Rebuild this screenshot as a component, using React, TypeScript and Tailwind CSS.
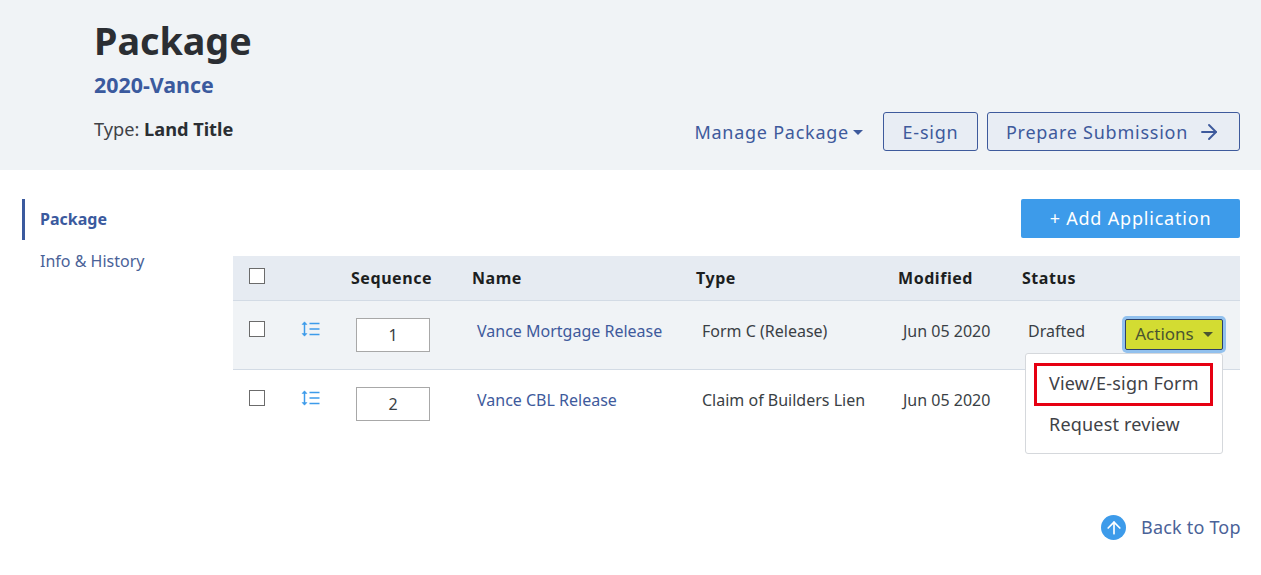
import { ArrowRight, ArrowUp } from 'lucide-react';

const cols = 'grid grid-cols-[68px_50px_121px_224px_202px_124px_1fr]';

function Checkbox({ className }: { className: string }) {
    return <div className={`w-4 h-4 bg-white border border-[#6b6b6b] ${className}`} />;
}

function SortIcon() {
    return (
        <svg width="20" height="16" viewBox="0 0 20 16" fill="none" stroke="#3d9bea" strokeWidth="1.5">
            <path d="M3.5 2v12" />
            <path d="M1 3.5 3.5 0.8 6 3.5z" fill="#3d9bea" strokeWidth="0.5" />
            <path d="M1 12.5 3.5 15.2 6 12.5z" fill="#3d9bea" strokeWidth="0.5" />
            <path d="M8.5 2.5h10M8.5 8h10M8.5 13.5h10" />
        </svg>
    );
}

function Row({ seq, name, type, status, rowClass }: { seq: string; name: string; type: string; status?: string; rowClass: string }) {
    return (
        <div className={`${cols} ${rowClass} border-b border-[#d3dbe5] text-[16px] text-[#3a3f45]`}>
            <div className="pl-[16px] pt-[20px]">
                <Checkbox className="" />
            </div>
            <div className="pt-[20px]">
                <SortIcon />
            </div>
            <div className="pl-[5px] pt-[17px]">
                <div className="w-[74px] h-[34px] bg-white border border-[#a8a8a8] flex items-center justify-center">{seq}</div>
            </div>
            <div className="pl-[5px] pt-[18px] text-[#3e5a9c] whitespace-nowrap">{name}</div>
            <div className="pl-[6px] pt-[18px] whitespace-nowrap">{type}</div>
            <div className="pl-[5px] pt-[18px] whitespace-nowrap">Jun 05 2020</div>
            <div className="pl-[6px] pt-[18px]">{status}</div>
        </div>
    );
}

export default function App() {
    return (
        <div className="relative h-[575px] w-[1261px] overflow-hidden bg-white font-['Noto_Sans',sans-serif]">
            <header className="h-[170px] bg-[#f0f3f6] flex justify-between pl-[94px] pr-[21px]">
                <div>
                    <h1 className="text-[37.7px] leading-[46px] font-bold text-[#2b2e33] pt-[18px] box-content">Package</h1>
                    <div className="text-[21.4px] leading-[28px] font-bold text-[#3b5a9e] mt-[7px]">2020-Vance</div>
                    <div className="text-[18.2px] leading-[24px] text-[#3f4247] mt-[18px]">
                        Type: <span className="font-bold text-[#2b2e33]">Land Title</span>
                    </div>
                </div>
                <div className="flex items-start gap-[9px] pt-[112px] text-[18px] tracking-[0.75px] text-[#3e5a9c]">
                    <div className="flex items-center h-[39px] pt-[2px] mr-[11px] gap-[4px]">
                        Manage Package
                        <span className="w-0 h-0 border-x-[5px] border-x-transparent border-t-[5px] border-t-[#3e5a9c]" />
                    </div>
                    <button className="h-[39px] w-[95px] border border-[#3e5a9c] rounded-[3px] bg-[#e8edf4] pt-[2px]">E-sign</button>
                    <button className="h-[39px] w-[253px] border border-[#3e5a9c] rounded-[3px] bg-[#e8edf4] flex items-center justify-center gap-[9px] pt-[2px]">
                        Prepare Submission
                        <ArrowRight className="w-[24px] h-[24px] -mt-[2px]" strokeWidth={1.9} />
                    </button>
                </div>
            </header>

            <div className="flex pt-[29px] pr-[21px]">
                <nav className="w-[233px] pl-[22px] shrink-0">
                    <div className="h-[41px] border-l-[3px] border-[#3b5a9e] pl-[15px] pb-[2px] flex items-center text-[16px] font-bold text-[#3b5a9e]">Package</div>
                    <div className="pl-[18px] mt-[9px] text-[16px] leading-[24px] text-[#4a6298]">Info &amp; History</div>
                </nav>
                <main className="flex-1">
                    <div className="flex justify-end">
                        <button className="h-[39px] w-[219px] bg-[#3d9bea] rounded-[2px] text-white text-[18px] tracking-[0.8px]">+ Add Application</button>
                    </div>
                    <div className={`${cols} mt-[18px] h-[45px] bg-[#e6ebf2] border-b border-[#d3dbe5] text-[16px] font-bold text-[#1c1e21] tracking-[0.55px]`}>
                        <div className="pl-[16px] pt-[12px]">
                            <Checkbox className="" />
                        </div>
                        <div />
                        <div className="pt-[10px]">Sequence</div>
                        <div className="pt-[10px]">Name</div>
                        <div className="pt-[10px]">Type</div>
                        <div className="pt-[10px]">Modified</div>
                        <div className="pt-[10px]">Status</div>
                    </div>
                    <Row seq="1" name="Vance Mortgage Release" type="Form C (Release)" status="Drafted" rowClass="h-[69px] bg-[#f0f3f6]" />
                    <Row seq="2" name="Vance CBL Release" type="Claim of Builders Lien" rowClass="h-[69px] border-b-0" />
                </main>
            </div>

            <button className="absolute left-[1125px] top-[319px] w-[98px] h-[31px] bg-[#d3dc32] border border-[#2c3f6b] rounded-[2px] ring-[3px] ring-[#92c1ee] text-[17px] text-[#4a5530] flex items-center justify-center gap-[9px] pb-[1px]">
                Actions
                <span className="w-0 h-0 border-x-[5px] border-x-transparent border-t-[5px] border-t-[#4a5530]" />
            </button>

            <div className="absolute left-[1025px] top-[353px] w-[198px] h-[101px] bg-white border border-[#d5d8dc] rounded-[3px] text-[18px] tracking-[0.2px] text-[#3f4247]">
                <div className="ml-[8px] mt-[9px] w-[179px] h-[43px] border-[3px] border-[#e60012] pl-[12px] pb-[2px] flex items-center whitespace-nowrap">View/E-sign Form</div>
                <div className="pl-[23px] mt-[4px] leading-[28px]">Request review</div>
            </div>

            <div className="absolute left-[1101px] top-[514px] flex items-center gap-[15px] text-[18px] text-[#4a6298] tracking-[0.2px]">
                <span className="w-[25px] h-[25px] rounded-full bg-[#3d9bea] flex items-center justify-center">
                    <ArrowUp className="w-[20px] h-[20px] text-white" strokeWidth={2} />
                </span>
                Back to Top
            </div>
        </div>
    );
}
